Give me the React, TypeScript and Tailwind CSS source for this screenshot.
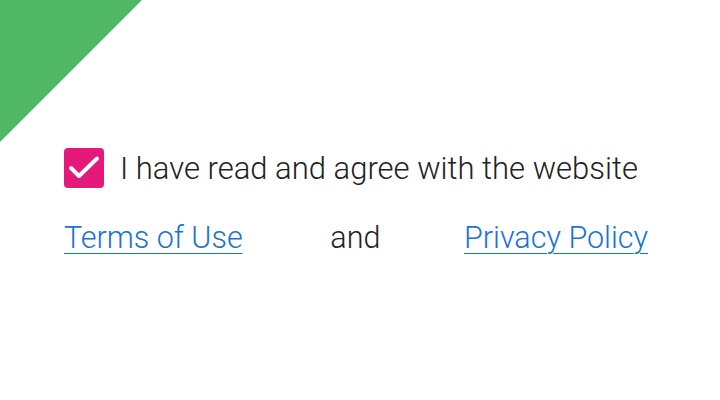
import React, { useState } from 'react';

export default function App() {
  const [checked, setChecked] = useState(true);

  return (
    <div className="relative h-[400px] w-[720px] overflow-hidden bg-white" style={{ fontFamily: 'Roboto, "Open Sans", sans-serif' }}>
      {/* corner ribbon */}
      <svg className="absolute left-0 top-0" width="142" height="142" viewBox="0 0 142 142">
        <polygon points="0,0 142,0 0,142" fill="#50b864" />
      </svg>

      <div className="flex flex-col pl-16 pt-[148px]">
        <label className="flex items-center gap-4 cursor-pointer">
          <button
            type="button"
            onClick={() => setChecked(!checked)}
            className="flex h-10 w-10 shrink-0 items-center justify-center rounded-[4px] bg-[#e5197a]"
          >
            {checked && (
              <svg width="40" height="40" viewBox="0 0 40 40" fill="none">
                <path d="M7 20 L15 28 L33 10.5" stroke="white" strokeWidth="4" strokeLinecap="round" strokeLinejoin="round" />
              </svg>
            )}
          </button>
          <span className="text-[31px] font-light leading-none text-[#222222]">I have read and agree with the website</span>
        </label>

        <div className="mt-[30px] flex w-[584px] items-baseline justify-between text-[30.5px] font-light leading-10">
          <a href="#" className="text-[#1a73d8] underline decoration-1 underline-offset-[5px]">Terms of Use</a>
          <span className="ml-1 text-[#222222]">and</span>
          <a href="#" className="text-[#1a73d8] underline decoration-1 underline-offset-[5px]">Privacy Policy</a>
        </div>
      </div>
    </div>
  );
}
